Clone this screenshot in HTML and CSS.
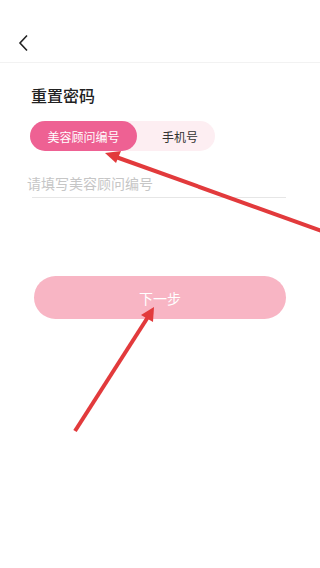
FILE: index.html
```html
<!DOCTYPE html>
<html lang="zh-CN">
<head>
  <meta charset="UTF-8">
  <meta name="viewport" content="width=device-width, initial-scale=1">
  <title>重置密码</title>
  <link rel="stylesheet" href="styles.css">
</head>
<body>
  <header class="top-bar">
    <svg class="back-icon" width="12" height="18" viewBox="0 0 12 18">
      <polyline points="9,1.5 2,9 9,16.5" fill="none" stroke="#222" stroke-width="1.6"/>
    </svg>
  </header>

  <main class="content">
    <h1 class="title">重置密码</h1>

    <div class="tabs">
      <span class="tab active">美容顾问编号</span>
      <span class="tab">手机号</span>
    </div>

    <div class="field">
      <input type="text" class="field-input" placeholder="请填写美容顾问编号">
    </div>

    <button type="button" class="next-btn">下一步</button>
  </main>

  <!-- annotation arrows drawn over the screenshot -->
  <svg class="marks" width="320" height="568" viewBox="0 0 320 568">
    <line x1="322" y1="231" x2="116" y2="157" stroke="#e23a3c" stroke-width="4"/>
    <polygon points="105,153 121,151 116,163" fill="#e23a3c"/>
    <line x1="75" y1="431" x2="148" y2="317" stroke="#e23a3c" stroke-width="4"/>
    <polygon points="154,307 153,322 141,315" fill="#e23a3c"/>
  </svg>
</body>
</html>
```

FILE: styles.css
```css
body {
  margin: 0;
  background: #fff;
  font-family: "Noto Sans CJK SC", "Noto Sans", sans-serif;
  color: #222;
}
.top-bar {
  height: 63px;
  border-bottom: 1px solid #f2f2f2;
  display: flex;
  align-items: flex-start;
  padding: 34px 0 0 18px;
  box-sizing: border-box;
}
.back-icon {
  display: block;
}
.content {
  padding: 20px 34px 0 31px;
}
.title {
  margin: 0;
  font-size: 16px;
  font-weight: 500;
  line-height: 24px;
  color: #222;
}
.tabs {
  display: flex;
  width: 185px;
  height: 30px;
  margin-top: 14px;
  margin-left: -1px;
  border-radius: 15px;
  background: #fdeef2;
}
.tab {
  flex: 1;
  display: flex;
  align-items: center;
  justify-content: center;
  padding-left: 8px;
  font-size: 12px;
  color: #333;
  border-radius: 15px;
}
.tab.active {
  flex: 0 0 107px;
  padding-left: 0;
  background: #ee6193;
  color: #fff;
}
.field {
  margin-top: 19px;
  margin-left: 1px;
  border-bottom: 1px solid #e6e6e6;
}
.field-input {
  width: 100%;
  border: none;
  outline: none;
  padding: 0 0 4px 0;
  margin-left: -5px;
  font-family: inherit;
  font-size: 14px;
  line-height: 20px;
  color: #333;
  background: transparent;
}
.field-input::placeholder {
  color: #c6c6c6;
}
.next-btn {
  display: block;
  width: 252px;
  height: 43px;
  margin: 78px 0 0 3px;
  border: none;
  border-radius: 22px;
  background: #f8b5c4;
  color: #fff;
  font-family: inherit;
  font-size: 14px;
}
.marks {
  position: absolute;
  left: 0;
  top: 0;
  pointer-events: none;
}
```
